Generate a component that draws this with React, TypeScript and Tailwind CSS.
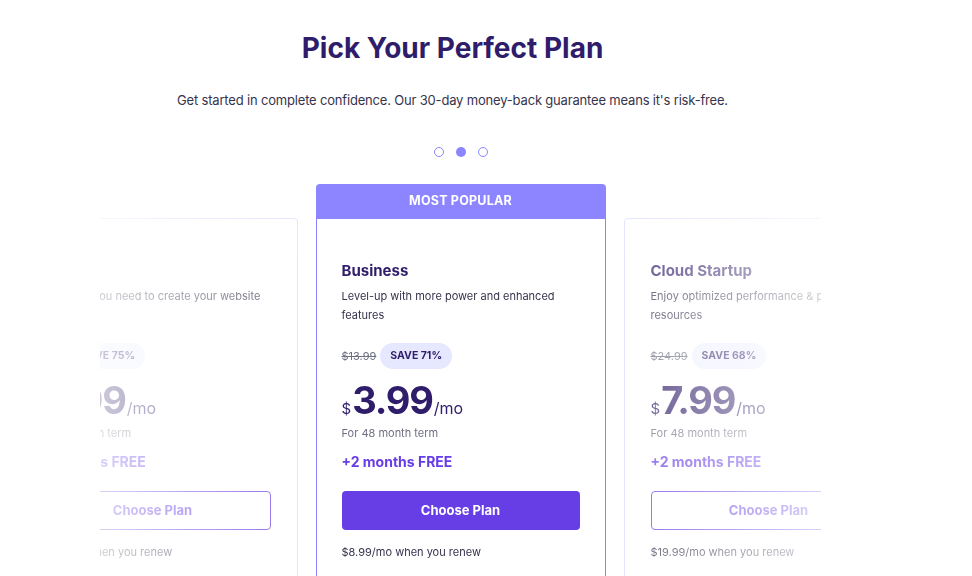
import React from "react";

type Plan = {
  name: string;
  desc: string;
  oldPrice: string;
  save: string;
  price: string;
  bonus: string;
  renew: string;
  popular?: boolean;
};

const plans: Plan[] = [
  {
    name: "Premium",
    desc: "Everything you need to create your website",
    oldPrice: "$11.99",
    save: "SAVE 75%",
    price: "2.99",
    bonus: "+3 months FREE",
    renew: "$7.99/mo when you renew",
  },
  {
    name: "Business",
    desc: "Level-up with more power and enhanced features",
    oldPrice: "$13.99",
    save: "SAVE 71%",
    price: "3.99",
    bonus: "+2 months FREE",
    renew: "$8.99/mo when you renew",
    popular: true,
  },
  {
    name: "Cloud Startup",
    desc: "Enjoy optimized performance & powerful resources",
    oldPrice: "$24.99",
    save: "SAVE 68%",
    price: "7.99",
    bonus: "+2 months FREE",
    renew: "$19.99/mo when you renew",
  },
];

const PlanCard = ({ plan }: { plan: Plan }) => {
  const side = !plan.popular;
  return (
    <div className={side ? "w-[290px] shrink-0 pt-[34px] opacity-80" : "w-[290px] shrink-0"}>
      {plan.popular && (
        <div className="h-[34px] rounded-t-[4px] bg-[#8c85ff] flex items-center justify-center text-[12.5px] font-bold text-white tracking-[0.2px]">
          MOST POPULAR
        </div>
      )}
      <div
        className={
          side
            ? "h-[400px] border border-[#d9ddfb] rounded-[4px] px-[26px] pt-[42px]"
            : "h-[400px] border border-[#8c85ff] px-[25px] pt-[42px]"
        }
      >
        <h3 className="text-[15px] leading-5 font-bold text-[#2f1c6a]">{plan.name}</h3>
        <p className="mt-[6px] min-h-[38px] text-[11px] leading-[19px] text-[#36344d]">{plan.desc}</p>

        <div className="mt-[18px] flex items-center gap-[4px]">
          <span className="text-[11px] text-[#6d7081] line-through">{plan.oldPrice}</span>
          <span
            className={
              side
                ? "h-[26px] px-[10px] rounded-full bg-[#eef0ff] flex items-center text-[10.5px] font-bold text-[#2f1c6a]"
                : "h-[26px] px-[10px] rounded-full bg-[#e5e8ff] flex items-center text-[10.5px] font-bold text-[#2f1c6a]"
            }
          >
            {plan.save}
          </span>
        </div>

        <div className="mt-[12px] flex items-baseline text-[#2f1c6a] leading-none">
          <span className="text-[15px] mr-[1px]">$</span>
          <span className="text-[38px] font-bold tracking-[-1.2px]">{plan.price}</span>
          <span className="text-[16px] ml-[1px]">/mo</span>
        </div>

        <p className="mt-[6px] text-[11px] leading-4 text-[#6d7081]">For 48 month term</p>
        <p className="mt-[11px] text-[14px] leading-5 font-bold text-[#673de6]">{plan.bonus}</p>

        <button
          className={
            side
              ? "mt-[19px] w-full h-[39px] rounded-[4px] border border-[#673de6] text-[13px] font-bold text-[#673de6]"
              : "mt-[19px] w-full h-[39px] rounded-[4px] bg-[#673de6] text-[13px] font-bold text-white"
          }
        >
          Choose Plan
        </button>

        <p className="mt-[14px] text-[11px] leading-4 text-[#36344d]">{plan.renew}</p>
      </div>
    </div>
  );
};

const App = () => {
  return (
    <main className="min-h-screen bg-white overflow-hidden font-['Inter','Noto_Sans',sans-serif]">
      <div className="w-[921px] flex flex-col items-center pt-[30px]">
        <h1 className="pr-4 text-[28px] leading-9 font-bold text-[#2f1c6a]">
          Pick Your Perfect Plan
        </h1>
        <p className="pr-4 mt-[24px] text-[13px] leading-5 tracking-[-0.18px] text-[#36344d]">
          Get started in complete confidence. Our 30-day money-back guarantee means it's risk-free.
        </p>

        <div className="mt-[37px] flex items-center gap-3">
          <span className="w-[10px] h-[10px] rounded-full border-[1.5px] border-[#8c85ff]" />
          <span className="w-[10px] h-[10px] rounded-full bg-[#8c85ff]" />
          <span className="w-[10px] h-[10px] rounded-full border-[1.5px] border-[#8c85ff]" />
        </div>

        <div className="mt-[27px] w-[721px] overflow-hidden [mask-image:linear-gradient(to_right,rgba(0,0,0,0.3)_0%,#000_30%,#000_70%,rgba(0,0,0,0.3)_100%)]">
          <div className="flex justify-center gap-[18px]">
            {plans.map((p) => (
              <PlanCard key={p.name} plan={p} />
            ))}
          </div>
        </div>
      </div>
    </main>
  );
};

export default App;
